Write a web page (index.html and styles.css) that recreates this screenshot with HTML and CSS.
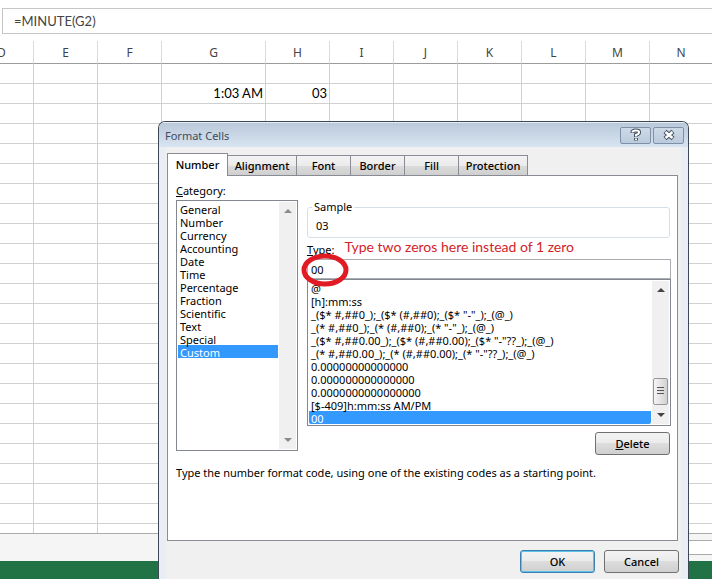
FILE: index.html
```html
<!DOCTYPE html>
<html lang="en">
<head>
    <meta charset="UTF-8">
    <meta name="viewport" content="width=device-width, initial-scale=1.0">
    <title>Format Cells</title>
    <link rel="stylesheet" href="styles.css">
</head>
<body>
    <input class="formula-bar" type="text" aria-label="Formula" value="=MINUTE(G2)">

    <div class="sheet">
        <table class="grid">
            <colgroup>
                <col><col><col><col class="wide"><col><col><col><col><col><col><col>
            </colgroup>
            <thead>
                <tr><th>D</th><th>E</th><th>F</th><th>G</th><th>H</th><th>I</th><th>J</th><th>K</th><th>L</th><th>M</th><th>N</th></tr>
            </thead>
            <tbody id="rows">
                <tr><td></td><td></td><td></td><td></td><td></td><td></td><td></td><td></td><td></td><td></td><td></td></tr>
                <tr><td></td><td></td><td></td><td>1:03 AM</td><td>03</td><td></td><td></td><td></td><td></td><td></td><td></td></tr>
            </tbody>
        </table>
    </div>
    <div class="sheet-tabs"><div class="sheet-scroll"></div></div>
    <div class="status-bar"></div>

    <div class="dialog" role="dialog" aria-labelledby="dialog-title">
        <div class="title-bar">
            <span id="dialog-title" class="title">Format Cells</span>
            <button type="button" class="caption-button" aria-label="Help">
                <svg width="12" height="14" viewBox="0 0 12 14" fill="none">
                    <path d="M2.500 5V4Q2.500 2.500 6 2.500T9 4.500Q9 6 6 7V9M6 10V12.500" stroke="#46515f" stroke-width="4"/>
                    <path d="M2.500 4.500V4Q2.500 2.500 6 2.500T9 4.500Q9 6 6 7V8.500M6 10.500V12" stroke="#fff" stroke-width="2"/>
                </svg>
            </button>
            <button type="button" class="caption-button" aria-label="Close">
                <svg width="14" height="12" viewBox="0 0 14 12" fill="none">
                    <path d="M3 2.500L11 9.500M11 2.500L3 9.500" stroke="#46515f" stroke-width="4.500"/>
                    <path d="M3.500 3L10.500 9M10.500 3L3.500 9" stroke="#fff" stroke-width="2.500"/>
                </svg>
            </button>
        </div>

        <div class="dialog-body">
            <div class="tabs" role="tablist">
                <button type="button" role="tab" class="tab active" aria-selected="true">Number</button>
                <button type="button" role="tab" class="tab tab-long">Alignment</button>
                <button type="button" role="tab" class="tab">Font</button>
                <button type="button" role="tab" class="tab">Border</button>
                <button type="button" role="tab" class="tab">Fill</button>
                <button type="button" role="tab" class="tab tab-long">Protection</button>
            </div>

            <div class="panel">
                <div class="columns">
                    <div class="category">
                        <label for="category"><u>C</u>ategory:</label>
                        <div class="list-box category-box">
                            <select id="category" size="12">
                                <option>General</option>
                                <option>Number</option>
                                <option>Currency</option>
                                <option>Accounting</option>
                                <option>Date</option>
                                <option>Time</option>
                                <option>Percentage</option>
                                <option>Fraction</option>
                                <option>Scientific</option>
                                <option>Text</option>
                                <option>Special</option>
                                <option selected>Custom</option>
                            </select>
                            <div class="scrollbar disabled">
                                <span class="arrow up"></span>
                                <span class="arrow down"></span>
                            </div>
                        </div>
                    </div>

                    <div class="format">
                        <fieldset class="sample">
                            <legend>Sample</legend>
                            03
                        </fieldset>
                        <div class="type-row">
                            <label for="type"><u>T</u>ype:</label>
                            <span class="note">Type two zeros here instead of 1 zero</span>
                        </div>
                        <div class="type-field">
                            <input id="type" type="text" value="00">
                            <svg class="circle" width="48" height="34" viewBox="0 0 48 34">
                                <ellipse cx="24" cy="17" rx="21" ry="14" fill="none" stroke="#e01b24" stroke-width="5"/>
                            </svg>
                        </div>
                        <div class="list-box">
                            <select size="11" aria-label="Format codes">
                                <option>@</option>
                                <option>[h]:mm:ss</option>
                                <option>_($* #,##0_);_($* (#,##0);_($* "-"_);_(@_)</option>
                                <option>_(* #,##0_);_(* (#,##0);_(* "-"_);_(@_)</option>
                                <option>_($* #,##0.00_);_($* (#,##0.00);_($* "-"??_);_(@_)</option>
                                <option>_(* #,##0.00_);_(* (#,##0.00);_(* "-"??_);_(@_)</option>
                                <option>0.00000000000000</option>
                                <option>0.000000000000000</option>
                                <option>0.0000000000000000</option>
                                <option>[$-409]h:mm:ss AM/PM</option>
                                <option selected>00</option>
                            </select>
                            <div class="scrollbar">
                                <span class="arrow up"></span>
                                <span class="thumb"></span>
                                <span class="arrow down"></span>
                            </div>
                        </div>
                        <button type="button" class="button delete"><span><u>D</u>elete</span></button>
                    </div>
                </div>
                <p class="hint">Type the number format code, using one of the existing codes as a starting point.</p>
            </div>

            <div class="actions">
                <button type="button" class="button default">OK</button>
                <button type="button" class="button">Cancel</button>
            </div>
        </div>
    </div>

    <script>
        // fill the rest of the sheet with empty rows
        const rows = document.getElementById('rows');
        const emptyRow = rows.rows[0];
        for (let i = 0; i < 60; i++) {
            rows.appendChild(emptyRow.cloneNode(true));
        }
    </script>
</body>
</html>
```

FILE: styles.css
```css
* {
    box-sizing: border-box;
}
body {
    margin: 0;
    height: 100vh;
    display: flex;
    flex-direction: column;
    overflow: hidden;
    background-color: #fff;
    color: #000;
    font-family: "Noto Sans", "Open Sans", sans-serif;
    font-size: 11px;
}
button, input, select {
    font: inherit;
    color: inherit;
}

/* Worksheet */
.formula-bar {
    margin: 8px 0 0 2px;
    height: 26px;
    flex: none;
    padding: 0 11px;
    border: 1px solid #c6c6c6;
    border-right: none;
    color: #444;
    font-family: Lato, sans-serif;
    font-size: 13px;
}
.sheet {
    flex: 1;
    min-height: 0;
    padding-top: 7px;
    overflow: hidden;
    border-bottom: 1px solid #ababab;
}
.grid {
    width: calc(100% + 30px);
    margin-left: -30px; /* column D is half scrolled out */
    table-layout: fixed;
    border-collapse: separate;
    border-spacing: 0;
}
.grid col {
    width: 64px;
}
.grid col.wide {
    width: 104px;
}
.grid col:last-child {
    width: auto;
}
.grid th {
    height: 23px;
    padding: 2px 0 0;
    border-right: 1px solid #dcdcdc;
    border-bottom: 1px solid #9c9c9c;
    color: #444;
    font-size: 12px;
    font-weight: normal;
    line-height: 18px;
}
.grid td {
    height: 20px;
    padding: 0 2px;
    border-right: 1px solid #d0d0d0;
    border-bottom: 1px solid #d0d0d0;
    font-family: Lato, sans-serif;
    font-size: 13px;
    line-height: 19px;
    text-align: right;
}
.grid th:last-child, .grid td:last-child {
    border-right: none;
}
.sheet-tabs {
    height: 27px;
    flex: none;
    padding-top: 6px;
    background-color: #f5f5f5;
}
.sheet-scroll {
    height: 15px;
    border: solid #ababab;
    border-width: 1px 0;
    margin-left: 50%;
    background-color: #fff;
}
.status-bar {
    height: 18px;
    flex: none;
    background-color: #217346;
}

/* Dialog window */
.dialog {
    position: absolute;
    left: 158px;
    top: 121px;
    width: 531px;
    border: 1px solid #3d4855;
    border-bottom: none;
    border-radius: 7px 7px 0 0;
    background-color: #e9eef4;
    overflow: hidden;
}
.title-bar {
    height: 25px;
    display: flex;
    align-items: center;
    gap: 2px;
    padding: 0 4px 0 6px;
    border-top: 1px solid #e6edf5;
    background: linear-gradient(#bac9da, #d8e4f1);
}
.title {
    flex: 1;
    color: #3f4c5c;
    font-size: 11px;
}
.caption-button {
    width: 31px;
    height: 17px;
    display: flex;
    align-items: center;
    justify-content: center;
    padding: 0;
    border: 1px solid #7f90a8;
    border-radius: 2px;
    background: linear-gradient(#ccd9e7, #bccbdc);
}
.dialog-body {
    margin: 0 7px;
    padding: 6px 2px 8px 1px;
    background-color: #f0f0f0;
}

/* Tabs */
.tabs {
    display: flex;
    align-items: flex-end;
}
.tab {
    width: 54px;
    height: 20px;
    padding: 0;
    border: 1px solid #898c95;
    border-left-width: 0;
    border-bottom: none;
    background: linear-gradient(#f3f3f3, #ebebeb 50%, #dcdcdc 50%, #cfcfcf);
    font-weight: 500;
    line-height: 18px;
}
.tab-long {
    width: 69px;
}
.tab.active {
    width: 61px;
    height: 23px;
    margin-bottom: -1px;
    border-left-width: 1px;
    background: #fff;
    position: relative;
    z-index: 1;
}
.panel {
    height: 366px;
    margin-right: 1px;
    padding: 7px 6px 8px 8px;
    border: 1px solid #898c95;
    background-color: #fff;
}
.columns {
    display: flex;
    gap: 9px;
}
.category {
    width: 122px;
}
.category label {
    display: block;
    height: 17px;
    line-height: 16px;
}
.format {
    flex: 1;
    display: flex;
    flex-direction: column;
}

/* List boxes */
.list-box {
    display: flex;
    border: 1px solid #828790;
    padding: 1px;
    background-color: #fff;
}
.category-box {
    height: 251px;
}
.list-box select {
    flex: 1;
    min-width: 0;
    padding: 0;
    border: none;
    outline: none;
    overflow: hidden;
    background: none;
}
.list-box option {
    height: 13px;
    min-height: 13px;
    padding: 0 2px;
    line-height: 13px;
}
.list-box option:checked {
    background: linear-gradient(#3399ff, #3399ff);
    -webkit-text-fill-color: #fff;
}
.scrollbar {
    width: 17px;
    margin-left: 1px;
    display: flex;
    flex-direction: column;
    align-items: center;
    padding: 7px 0;
    background-color: #f0f0f0;
}
.arrow {
    border: 4px solid transparent;
}
.arrow.up {
    border-top: none;
    border-bottom-color: #444;
}
.arrow.down {
    border-bottom: none;
    border-top-color: #444;
}
.disabled .arrow.up {
    border-bottom-color: #8a8a8a;
}
.disabled .arrow.down {
    margin-top: auto;
    border-top-color: #8a8a8a;
}
.thumb {
    width: 15px;
    height: 27px;
    margin: auto 0 8px;
    border: 1px solid #979797;
    border-radius: 2px;
    background:
        repeating-linear-gradient(#555 0 1px, transparent 1px 3px) center / 7px 9px no-repeat,
        linear-gradient(90deg, #f5f5f5, #d2d2d2);
}

/* Right column */
.sample {
    height: 38px;
    margin: 17px 1px 0 0;
    padding: 4px 8px;
    border: 1px solid #d5dfe5;
    border-radius: 3px;
    line-height: 16px;
}
.sample legend {
    margin-left: -4px;
    padding: 0 2px;
    line-height: 14px;
}
.type-row {
    height: 21px;
    display: flex;
    gap: 10px;
}
.type-row label {
    padding-top: 3px;
    line-height: 18px;
}
.note {
    color: #d2232a;
    font-family: Lato, sans-serif;
    font-size: 14px;
    line-height: 17px;
}
.type-field {
    position: relative;
}
.type-field input {
    display: block;
    width: 100%;
    height: 20px;
    padding: 0 3px;
    border: 1px solid #abadb3;
}
.circle {
    position: absolute;
    left: -6px;
    top: -6px;
}
.button {
    width: 75px;
    height: 23px;
    padding: 0;
    border: 1px solid #707070;
    border-radius: 3px;
    background: linear-gradient(#f3f3f3, #ebebeb 50%, #dddddd 50%, #cfcfcf);
    font-weight: 500;
}
.button.delete {
    align-self: flex-end;
    margin: 6px 1px 0 0;
}
.button.default {
    border-color: #3c7fb1;
    box-shadow: inset 0 0 0 1px #5cc4ea;
}
.hint {
    margin: 10px 0 0;
    line-height: 16px;
}
.actions {
    display: flex;
    justify-content: flex-end;
    gap: 9px;
    padding-top: 9px;
}
```
